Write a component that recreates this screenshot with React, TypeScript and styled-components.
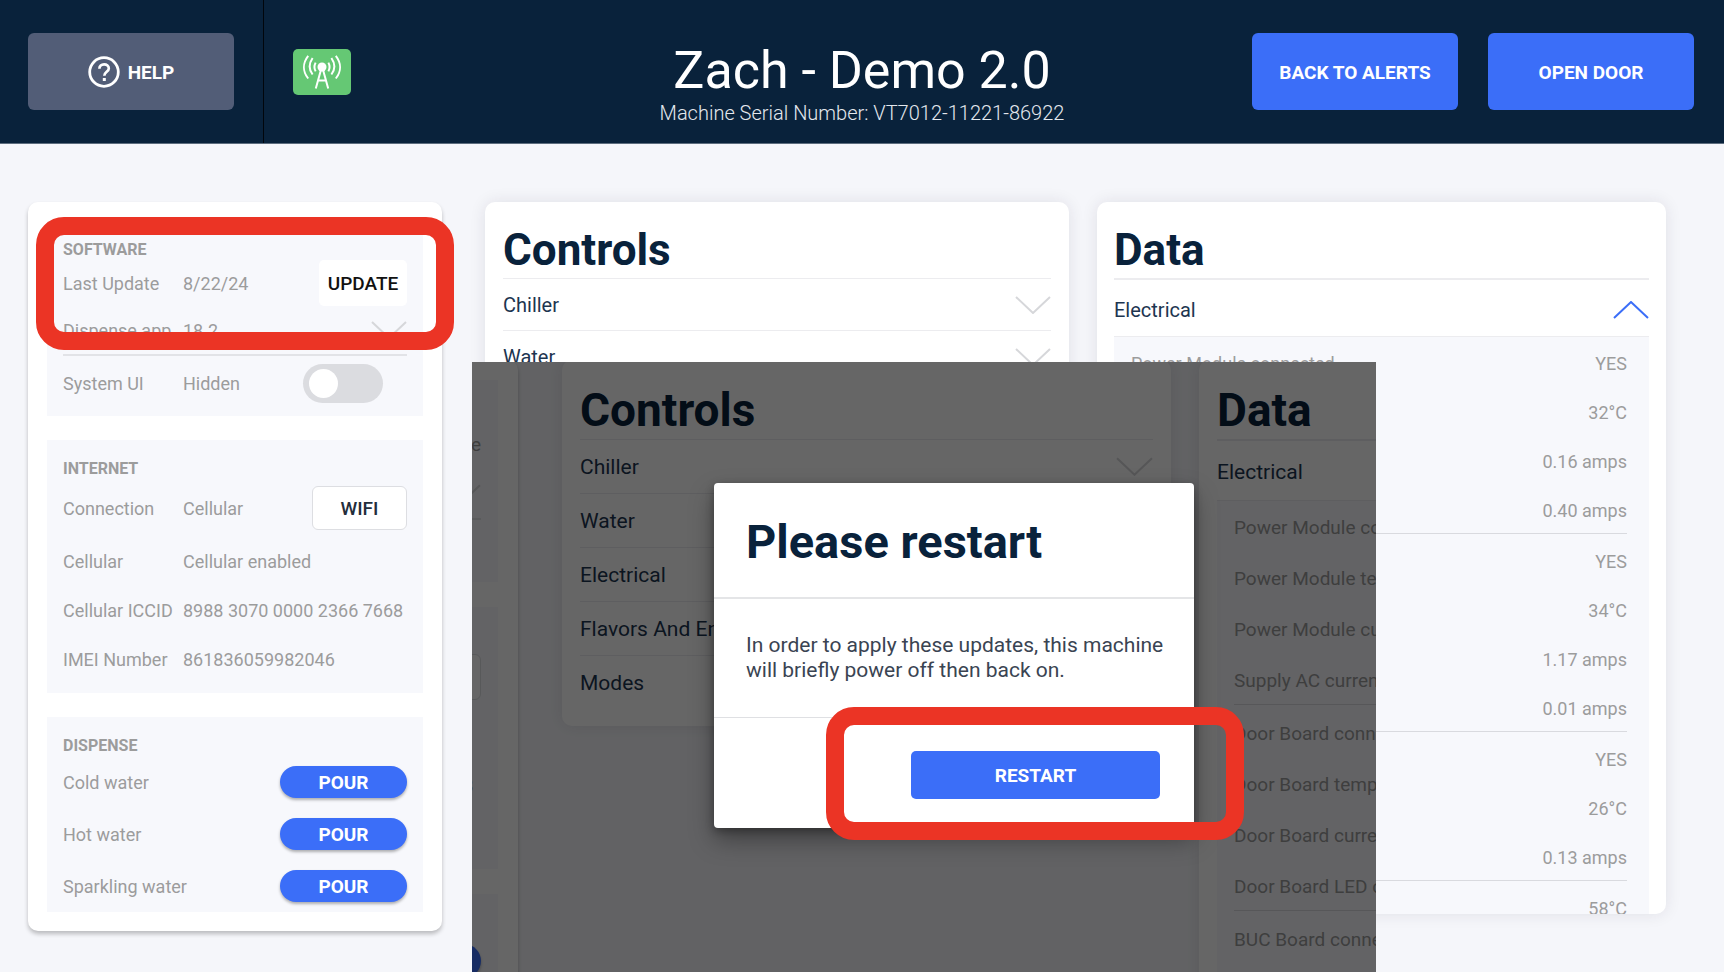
import React from "react";
import styled, { createGlobalStyle, css, ThemeProvider } from "styled-components";

const navy = "#09223b";
const blue = "#3b6ef8";
const grey = "#9c9c9c";
const paper = "#f5f6fa";

const regular = {
  text: 18, heading: 16, action: 19, head: 44, item: 20,
  cardPad: 19, cardGap: 24, panelPad: 16, headTop: 19, col: 120,
  row: 46, appRow: 50, uiRow: 60, wifiRow: 58, netRow: 49, pourRow: 52,
  wifiW: 95, wifiH: 44, pourW: 127, pourH: 32, netEnd: 9,
  titleTop: 20, titleH: 57, itemRow: 52, dataRow: 57, sidePad: 18,
  listTop: 4, dataH: 45, dataGap: 4, groupPad: 5, chevW: 36, chevH: 18,
};

const large: typeof regular = {
  text: 19, heading: 17, action: 20, head: 46, item: 21,
  cardPad: 20, cardGap: 25, panelPad: 17, headTop: 20, col: 117,
  row: 48, appRow: 52, uiRow: 62, wifiRow: 60, netRow: 52, pourRow: 54,
  wifiW: 99, wifiH: 46, pourW: 132, pourH: 34, netEnd: 6,
  titleTop: 21, titleH: 59, itemRow: 54, dataRow: 60, sidePad: 18,
  listTop: 3, dataH: 47, dataGap: 4, groupPad: 5, chevW: 37, chevH: 19,
};

type Metrics = typeof regular;

declare module "styled-components" {
  export interface DefaultTheme extends Metrics {}
}

const Global = createGlobalStyle`
  *, *::before, *::after { box-sizing: border-box; }
  body { margin: 0; background: ${paper}; font-family: Roboto, "Liberation Sans", sans-serif; }
  button { font-family: inherit; border: 0; padding: 0; cursor: pointer; }
  h1, h2, h3, p, ul { margin: 0; padding: 0; }
  ul { list-style: none; }
`;

const Page = styled.div`
  position: relative;
  min-height: 100vh;
  overflow: hidden;
  background: ${paper};
`;

const Header = styled.header`
  display: grid;
  grid-template-columns: 1fr auto 1fr;
  align-items: stretch;
  height: 144px;
  background: ${navy};
  border-bottom: 1px solid #5d6d7e;
`;

const HeaderStart = styled.div`
  display: flex;
  align-items: center;
`;

const HelpCell = styled.div`
  display: flex;
  align-items: center;
  align-self: stretch;
  padding: 0 29px 0 28px;
  border-right: 1px solid #01060c;
`;

const HeaderEnd = styled.div`
  display: flex;
  align-items: center;
  justify-content: flex-end;
  gap: 30px;
  padding-right: 30px;
`;

const HeaderButton = styled.button<{ $muted?: boolean }>`
  display: flex;
  align-items: center;
  justify-content: center;
  gap: 8px;
  width: 206px;
  height: 77px;
  padding-top: 1px;
  border-radius: 6px;
  background: ${(p) => (p.$muted ? "#525d77" : blue)};
  color: #fff;
  font-size: 19px;
  font-weight: 700;
`;

const Signal = styled.div`
  display: flex;
  align-items: center;
  justify-content: center;
  width: 58px;
  height: 46px;
  margin-left: 29px;
  border-radius: 5px;
  background: #65c874;
`;

const Titles = styled.div`
  display: flex;
  flex-direction: column;
  align-items: center;
  padding-top: 41px;
  color: #fff;
`;

const Title = styled.h1`
  font-size: 52px;
  line-height: 60px;
  font-weight: 400;
`;

const Serial = styled.p`
  font-size: 20px;
  line-height: 24px;
  font-weight: 300;
  color: #e4e8ee;
`;

const Columns = styled.main`
  display: grid;
  grid-template-columns: 414fr 627fr 597fr;
  align-items: start;
  padding: 58px 58px 41px 28px;
`;

const SideCard = styled.aside`
  position: relative;
  display: flex;
  flex-direction: column;
  gap: ${(p) => p.theme.cardGap}px;
  padding: ${(p) => p.theme.cardPad}px;
  border-radius: 10px;
  background: #fff;
  box-shadow: 0 3px 4px rgba(0, 0, 0, 0.24);
`;

const SidePanel = styled.section`
  padding: 0 ${(p) => p.theme.panelPad}px;
  background: #f7f8fc;
  color: ${grey};
  font-size: ${(p) => p.theme.text}px;
`;

const NetPanel = styled(SidePanel)`
  padding-bottom: ${(p) => p.theme.netEnd}px;
`;

const SideHeading = styled.h3`
  padding-top: ${(p) => p.theme.headTop}px;
  font-size: ${(p) => p.theme.heading}px;
  line-height: 20px;
  font-weight: 700;
`;

type RowKind = "row" | "appRow" | "uiRow" | "wifiRow" | "netRow" | "pourRow";

const InfoRow = styled.div<{ $kind: RowKind }>`
  display: flex;
  align-items: center;
  height: ${(p) => p.theme[p.$kind]}px;
  white-space: nowrap;
  ${(p) => p.$kind === "appRow" && css`border-bottom: 2px solid #e2e3e7;`}
  ${(p) => p.$kind === "uiRow" && css`padding-bottom: 6px;`}
`;

const Name = styled.label`
  flex: 0 0 ${(p) => p.theme.col}px;
`;

const Value = styled.span`
  flex: 1;
`;

const UpdateButton = styled.button`
  width: 88px;
  height: 46px;
  border-radius: 5px;
  background: #fff;
  color: #111;
  font-size: ${(p) => p.theme.action}px;
  font-weight: 500;
`;

const WifiButton = styled.button`
  width: ${(p) => p.theme.wifiW}px;
  height: ${(p) => p.theme.wifiH}px;
  border: 1px solid #dddee2;
  border-radius: 6px;
  background: #fff;
  color: #232d3b;
  font-size: ${(p) => p.theme.action}px;
  font-weight: 500;
`;

const PourButton = styled.button`
  width: ${(p) => p.theme.pourW}px;
  height: ${(p) => p.theme.pourH}px;
  border-radius: 17px;
  background: ${blue};
  color: #fff;
  font-size: 19px;
  font-weight: 700;
  box-shadow: 0 2px 3px rgba(0, 0, 0, 0.3);
`;

const Toggle = styled.input`
  appearance: none;
  display: flex;
  align-items: center;
  width: 80px;
  height: 39px;
  margin: 0 24px 0 0;
  padding: 0 6px;
  border-radius: 20px;
  background: #dbdce0;
  &::before {
    content: "";
    width: 29px;
    height: 29px;
    border-radius: 50%;
    background: #fff;
  }
  &:checked { background: ${blue}; justify-content: flex-end; }
`;

const Card = styled.section`
  padding: 0 ${(p) => p.theme.sidePad}px 16px;
  border-radius: 10px;
  background: #fff;
  box-shadow: 0 0 16px rgba(40, 30, 60, 0.1);
`;

const ControlsCard = styled(Card)`
  margin-left: 43px;
`;

const DataCard = styled(Card)`
  height: 712px;
  margin-left: 28px;
  overflow: hidden;
  padding: 0 17px;
`;

const CardTitle = styled.h2<{ $strong?: boolean }>`
  display: flex;
  align-items: center;
  height: ${(p) => p.theme.titleTop + p.theme.titleH + (p.$strong ? 1 : 0)}px;
  padding-top: ${(p) => p.theme.titleTop}px;
  border-bottom: ${(p) => (p.$strong ? 2 : 1)}px solid #ececef;
  color: ${navy};
  font-size: ${(p) => p.theme.head}px;
  font-weight: 700;
`;

const Accordion = styled.button<{ $open?: boolean; $last?: boolean }>`
  display: flex;
  align-items: center;
  justify-content: space-between;
  width: 100%;
  height: ${(p) => (p.$open ? p.theme.dataRow : p.theme.itemRow)}px;
  padding-top: ${(p) => (p.$open ? 3 : 0)}px;
  border-bottom: ${(p) => (p.$last ? 0 : 1)}px solid #ececef;
  background: none;
  color: #1d3550;
  font-size: ${(p) => p.theme.item}px;
  text-align: left;
`;

const Readings = styled.div`
  padding: ${(p) => p.theme.listTop}px 22px 0 17px;
  background: #f7f8fc;
  color: ${grey};
  font-size: ${(p) => p.theme.text}px;
`;

const Group = styled.ul<{ $divided: boolean }>`
  display: flex;
  flex-direction: column;
  gap: ${(p) => p.theme.dataGap}px;
  ${(p) =>
    p.$divided &&
    css`
      padding-top: ${p.theme.groupPad}px;
      border-top: 1px solid #d9dadf;
    `}
`;

const Reading = styled.li`
  display: flex;
  align-items: center;
  justify-content: space-between;
  height: ${(p) => p.theme.dataH}px;
  white-space: nowrap;
`;

/* The restart step opens as a window over the diagnostics screen. */
const Window = styled.div`
  position: absolute;
  top: 362px;
  bottom: 0;
  left: 472px;
  right: 348px;
  overflow: hidden;
  background: ${paper};
`;

/* The window shows its screen scrolled past most of the side card. */
const WindowColumns = styled.div`
  display: grid;
  grid-template-columns: 431px 609px 594px;
  column-gap: 28px;
  align-items: start;
  width: max-content;
  margin: -2px 0 0 -385px;
`;

const WindowControls = styled(Card)`
  margin: 0 -16px 0 16px;
`;

const WindowData = styled(Card)`
  margin: 0 -16px 0 16px;
`;

const Dimmer = styled.div`
  position: absolute;
  inset: 0;
  background: rgba(0, 0, 0, 0.6);
`;

const Dialog = styled.section`
  position: absolute;
  top: 121px;
  left: 242px;
  width: 480px;
  border-radius: 4px;
  background: #fff;
  box-shadow: 0 12px 24px rgba(0, 0, 0, 0.35), 0 3px 8px rgba(0, 0, 0, 0.3);
`;

const DialogTitle = styled.h2`
  padding: 32px 32px 28px;
  border-bottom: 2px solid #e4e5e7;
  color: ${navy};
  font-size: 47px;
  line-height: 54px;
  font-weight: 700;
`;

const DialogText = styled.p`
  padding: 34px 20px 34px 32px;
  border-bottom: 1px solid #dfe0e3;
  color: #3a4452;
  font-size: 21px;
  line-height: 25px;
`;

const DialogActions = styled.div`
  display: flex;
  justify-content: flex-end;
  padding: 33px 34px 29px;
`;

const RestartButton = styled.button`
  width: 249px;
  height: 48px;
  border-radius: 5px;
  background: ${blue};
  color: #fff;
  font-size: 19px;
  font-weight: 700;
`;

const Marker = styled.div<{ $top: number; $left: number }>`
  position: absolute;
  top: ${(p) => p.$top}px;
  left: ${(p) => p.$left}px;
  width: 418px;
  height: 133px;
  border: 18px solid #eb3425;
  border-radius: 28px;
  pointer-events: none;
`;

const ChevronSvg = styled.svg`
  flex: none;
  width: ${(p) => p.theme.chevW}px;
  height: ${(p) => p.theme.chevH}px;
  fill: none;
  stroke-width: 2;
`;

const Chevron = ({ up }: { up?: boolean }) => (
  <ChevronSvg viewBox="0 0 36 18" stroke={up ? blue : "#d6d7da"} aria-hidden="true">
    <path d={up ? "M1 17 18 1l17 16" : "M1 1l17 16L35 1"} />
  </ChevronSvg>
);

const HelpIcon = () => (
  <svg width="32" height="32" viewBox="0 0 32 32" fill="none" stroke="#fff" aria-hidden="true">
    <circle cx="16" cy="16" r="14.3" strokeWidth="2.8" />
    <path d="M11.4 12.8c0-2.7 2-4.4 4.7-4.4s4.7 1.7 4.700 4.100c0 3.200-4.500 3.500-4.500 7.200" strokeWidth="2.7" />
    <path d="M14.8 22h3v3h-3z" fill="#fff" stroke="none" />
  </svg>
);

const AntennaIcon = () => (
  <svg width="38" height="34" viewBox="0 0 38 34" fill="none" stroke="#fff" strokeWidth="2" aria-hidden="true">
    <circle cx="19" cy="12" r="4.5" fill="#fff" stroke="none" />
    <path d="M18.2 14 12.8 33.500M19.800 14l5.400 19.500M15 25.500h8" />
    <path d="M5.2.8C-.4 8-.4 16.500 5.200 23.500M9.600 3C5.800 8.600 5.800 14.500 9.600 19.500M12.600 7.600c-1.600 3-1.600 5.800 0 8.800" />
    <path d="M32.800.8c5.600 7.200 5.600 15.700 0 22.700M28.400 3c3.800 5.600 3.800 11.500 0 16.500M25.400 7.600c1.600 3 1.600 5.800 0 8.800" />
  </svg>
);

const pours = ["Cold water", "Hot water", "Sparkling water"];

const Side = ({ id, pending, children }: { id: string; pending?: boolean; children?: React.ReactNode }) => (
  <SideCard>
    <SidePanel>
      <SideHeading>SOFTWARE</SideHeading>
      <InfoRow $kind="row">
        <Name as="span">Last Update</Name>
        <Value>8/22/24</Value>
        {pending ? <span>Update</span> : <UpdateButton>UPDATE</UpdateButton>}
      </InfoRow>
      <InfoRow $kind="appRow">
        <Name as="span">Dispense app</Name>
        <Value>18.2</Value>
        <Chevron />
      </InfoRow>
      <InfoRow $kind="uiRow">
        <Name htmlFor={`${id}-system-ui`}>System UI</Name>
        <Value>Hidden</Value>
        <Toggle id={`${id}-system-ui`} type="checkbox" />
      </InfoRow>
    </SidePanel>
    <NetPanel>
      <SideHeading>INTERNET</SideHeading>
      <InfoRow $kind="wifiRow">
        <Name as="span">Connection</Name>
        <Value>Cellular</Value>
        <WifiButton>WIFI</WifiButton>
      </InfoRow>
      <InfoRow $kind="netRow">
        <Name as="span">Cellular</Name>
        <Value>Cellular enabled</Value>
      </InfoRow>
      <InfoRow $kind="netRow">
        <Name as="span">Cellular ICCID</Name>
        <Value>8988 3070 0000 2366 7668</Value>
      </InfoRow>
      <InfoRow $kind="netRow">
        <Name as="span">IMEI Number</Name>
        <Value>861836059982046</Value>
      </InfoRow>
    </NetPanel>
    <SidePanel>
      <SideHeading>DISPENSE</SideHeading>
      {pours.map((p) => (
        <InfoRow $kind="pourRow" key={p}>
          <Value>{p}</Value>
          <PourButton aria-label={`Pour ${p}`}>POUR</PourButton>
        </InfoRow>
      ))}
    </SidePanel>
    {children}
  </SideCard>
);

const controls = ["Chiller", "Water", "Electrical", "Flavors And Enhancements", "Modes"];

const ControlsList = () => (
  <>
    <CardTitle>Controls</CardTitle>
    <ul>
      {controls.map((c, i) => (
        <li key={c}>
          <Accordion $last={i === controls.length - 1}>
            {c}
            <Chevron />
          </Accordion>
        </li>
      ))}
    </ul>
  </>
);

const readings: [string, string][][] = [
  [
    ["Power Module connected", "YES"],
    ["Power Module temp", "32°C"],
    ["Power Module current", "0.16 amps"],
    ["Supply AC current", "0.40 amps"],
  ],
  [
    ["Door Board connected", "YES"],
    ["Door Board temp", "34°C"],
    ["Door Board current", "1.17 amps"],
    ["Door Board LED current", "0.01 amps"],
  ],
  [
    ["BUC Board connected", "YES"],
    ["BUC Board temp", "26°C"],
    ["BUC Board current", "0.13 amps"],
  ],
  [["CPU temp", "58°C"]],
];

const DataList = () => (
  <>
    <CardTitle $strong>Data</CardTitle>
    <Accordion $open aria-expanded="true">
      Electrical
      <Chevron up />
    </Accordion>
    <Readings>
      {readings.map((group, i) => (
        <Group key={i} $divided={i > 0}>
          {group.map(([name, value]) => (
            <Reading key={name}>
              <span>{name}</span>
              <span>{value}</span>
            </Reading>
          ))}
        </Group>
      ))}
    </Readings>
  </>
);

export default function App() {
  return (
    <ThemeProvider theme={regular}>
      <Global />
      <Page>
        <Header>
          <HeaderStart>
            <HelpCell>
              <HeaderButton $muted>
                <HelpIcon />
                HELP
              </HeaderButton>
            </HelpCell>
            <Signal>
              <AntennaIcon />
            </Signal>
          </HeaderStart>
          <Titles>
            <Title>Zach - Demo 2.0</Title>
            <Serial>Machine Serial Number: VT7012-11221-86922</Serial>
          </Titles>
          <HeaderEnd>
            <HeaderButton>BACK TO ALERTS</HeaderButton>
            <HeaderButton>OPEN DOOR</HeaderButton>
          </HeaderEnd>
        </Header>
        <Columns>
          <Side id="main">
            <Marker $top={15} $left={8} />
          </Side>
          <ControlsCard>
            <ControlsList />
          </ControlsCard>
          <DataCard>
            <DataList />
          </DataCard>
        </Columns>
        <Window>
          <ThemeProvider theme={large}>
            <WindowColumns aria-hidden="true">
              <Side id="window" pending />
              <WindowControls>
                <ControlsList />
              </WindowControls>
              <WindowData>
                <DataList />
              </WindowData>
            </WindowColumns>
          </ThemeProvider>
          <Dimmer />
          <Dialog role="dialog" aria-labelledby="restart-title">
            <DialogTitle id="restart-title">Please restart</DialogTitle>
            <DialogText>In order to apply these updates, this machine will briefly power off then back on.</DialogText>
            <DialogActions>
              <RestartButton>RESTART</RestartButton>
            </DialogActions>
            <Marker $top={224} $left={112} />
          </Dialog>
        </Window>
      </Page>
    </ThemeProvider>
  );
}
